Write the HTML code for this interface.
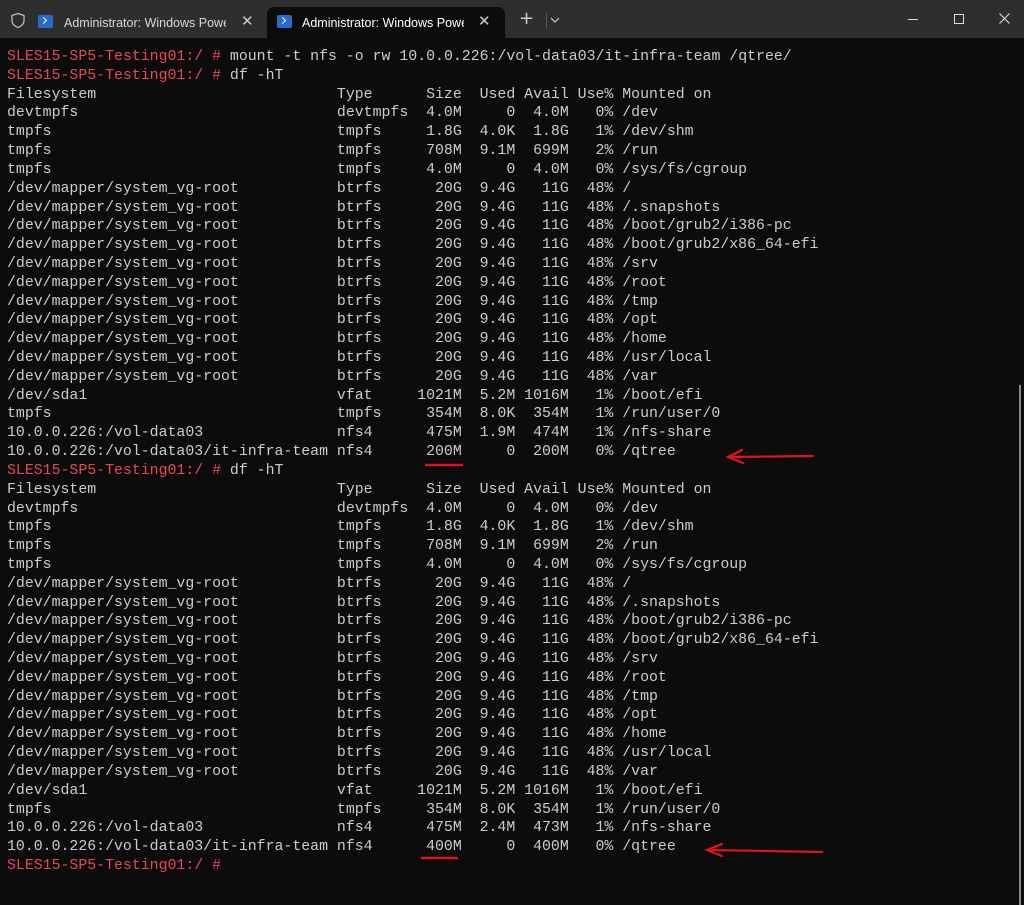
<!DOCTYPE html>
<html><head><meta charset="utf-8"><style>
html,body{margin:0;padding:0;background:#0c0c0c;width:1024px;height:905px;overflow:hidden}
#tb{position:absolute;left:0;top:0;width:1024px;height:38px;background:#2e2e2e}
.tab{position:absolute;top:7px;height:31px;font:12.5px "Liberation Sans",sans-serif;color:#d8d8d8}
.tab .t{position:absolute;top:9px;white-space:nowrap;overflow:hidden;width:162px}
.act{background:#0c0c0c;border-radius:7px 7px 0 0;left:267px;width:238px;color:#fff}
.ps{position:absolute;top:8px;width:15px;height:13px;background:#2a6ad0;border-radius:2px}
.ps:after{content:"";position:absolute;left:3px;top:3px;width:4px;height:4px;border-right:1.5px solid #fff;border-top:1.5px solid #fff;transform:rotate(45deg)}
.x{position:absolute;top:5px;font:15px "DejaVu Sans",sans-serif;color:#ccc}
#term{position:absolute;left:7px;top:48px;font:14.87px "Liberation Mono",monospace;color:#cccccc;line-height:18.82px;white-space:pre}
.r{color:#e74856}
i{font-style:normal;display:inline-block;width:37ch}
b{font-weight:normal;display:inline-block;width:9ch}
</style></head><body>
<div id="tb">
 <svg style="position:absolute;left:10px;top:12px" width="16" height="17" viewBox="0 0 16 17"><path d="M8 1.5 L14 3.5 V8.5 C14 12 11 14.5 8 15.5 C5 14.5 2 12 2 8.5 V3.5 Z" fill="none" stroke="#bbb" stroke-width="1.3"/></svg>
 <div class="tab" style="left:30px;width:230px">
  <div class="ps" style="left:8px"></div>
  <div class="t" style="left:34px">Administrator: Windows PowerShell</div>
  <div class="x" style="left:211px">✕</div>
 </div>
 <div class="tab act">
  <div class="ps" style="left:10px"></div>
  <div class="t" style="left:35px">Administrator: Windows PowerShell</div>
  <div class="x" style="left:211px">✕</div>
 </div>
 <div style="position:absolute;left:519px;top:8px;font:18px 'DejaVu Sans',sans-serif;color:#ccc">+</div>
 <div style="position:absolute;left:546px;top:13px;width:1px;height:16px;background:#555"></div>
 <svg style="position:absolute;left:550px;top:17px" width="10" height="7"><path d="M1 1 L5 5 L9 1" fill="none" stroke="#ccc" stroke-width="1.2"/></svg>
 <div style="position:absolute;left:908px;top:19px;width:10px;height:1px;background:#ddd"></div>
 <div style="position:absolute;left:954px;top:14px;width:8px;height:8px;border:1px solid #ddd"></div>
 <svg style="position:absolute;left:999px;top:13px" width="11" height="11"><path d="M0.5 0.5 L10.5 10.5 M10.5 0.5 L0.5 10.5" stroke="#ddd" stroke-width="1.1"/></svg>
</div>
<div id="term"><span class="r">SLES15-SP5-Testing01:/ #</span> mount -t nfs -o rw 10.0.0.226:/vol-data03/it-infra-team /qtree/
<span class="r">SLES15-SP5-Testing01:/ #</span> df -hT
<i>Filesystem</i><b>Type</b> Size  Used Avail Use% Mounted on
<i>devtmpfs</i><b>devtmpfs</b> 4.0M     0  4.0M   0% /dev
<i>tmpfs</i><b>tmpfs</b> 1.8G  4.0K  1.8G   1% /dev/shm
<i>tmpfs</i><b>tmpfs</b> 708M  9.1M  699M   2% /run
<i>tmpfs</i><b>tmpfs</b> 4.0M     0  4.0M   0% /sys/fs/cgroup
<i>/dev/mapper/system_vg-root</i><b>btrfs</b>  20G  9.4G   11G  48% /
<i>/dev/mapper/system_vg-root</i><b>btrfs</b>  20G  9.4G   11G  48% /.snapshots
<i>/dev/mapper/system_vg-root</i><b>btrfs</b>  20G  9.4G   11G  48% /boot/grub2/i386-pc
<i>/dev/mapper/system_vg-root</i><b>btrfs</b>  20G  9.4G   11G  48% /boot/grub2/x86_64-efi
<i>/dev/mapper/system_vg-root</i><b>btrfs</b>  20G  9.4G   11G  48% /srv
<i>/dev/mapper/system_vg-root</i><b>btrfs</b>  20G  9.4G   11G  48% /root
<i>/dev/mapper/system_vg-root</i><b>btrfs</b>  20G  9.4G   11G  48% /tmp
<i>/dev/mapper/system_vg-root</i><b>btrfs</b>  20G  9.4G   11G  48% /opt
<i>/dev/mapper/system_vg-root</i><b>btrfs</b>  20G  9.4G   11G  48% /home
<i>/dev/mapper/system_vg-root</i><b>btrfs</b>  20G  9.4G   11G  48% /usr/local
<i>/dev/mapper/system_vg-root</i><b>btrfs</b>  20G  9.4G   11G  48% /var
<i>/dev/sda1</i><b>vfat</b>1021M  5.2M 1016M   1% /boot/efi
<i>tmpfs</i><b>tmpfs</b> 354M  8.0K  354M   1% /run/user/0
<i>10.0.0.226:/vol-data03</i><b>nfs4</b> 475M  1.9M  474M   1% /nfs-share
<i>10.0.0.226:/vol-data03/it-infra-team</i><b>nfs4</b> 200M     0  200M   0% /qtree
<span class="r">SLES15-SP5-Testing01:/ #</span> df -hT
<i>Filesystem</i><b>Type</b> Size  Used Avail Use% Mounted on
<i>devtmpfs</i><b>devtmpfs</b> 4.0M     0  4.0M   0% /dev
<i>tmpfs</i><b>tmpfs</b> 1.8G  4.0K  1.8G   1% /dev/shm
<i>tmpfs</i><b>tmpfs</b> 708M  9.1M  699M   2% /run
<i>tmpfs</i><b>tmpfs</b> 4.0M     0  4.0M   0% /sys/fs/cgroup
<i>/dev/mapper/system_vg-root</i><b>btrfs</b>  20G  9.4G   11G  48% /
<i>/dev/mapper/system_vg-root</i><b>btrfs</b>  20G  9.4G   11G  48% /.snapshots
<i>/dev/mapper/system_vg-root</i><b>btrfs</b>  20G  9.4G   11G  48% /boot/grub2/i386-pc
<i>/dev/mapper/system_vg-root</i><b>btrfs</b>  20G  9.4G   11G  48% /boot/grub2/x86_64-efi
<i>/dev/mapper/system_vg-root</i><b>btrfs</b>  20G  9.4G   11G  48% /srv
<i>/dev/mapper/system_vg-root</i><b>btrfs</b>  20G  9.4G   11G  48% /root
<i>/dev/mapper/system_vg-root</i><b>btrfs</b>  20G  9.4G   11G  48% /tmp
<i>/dev/mapper/system_vg-root</i><b>btrfs</b>  20G  9.4G   11G  48% /opt
<i>/dev/mapper/system_vg-root</i><b>btrfs</b>  20G  9.4G   11G  48% /home
<i>/dev/mapper/system_vg-root</i><b>btrfs</b>  20G  9.4G   11G  48% /usr/local
<i>/dev/mapper/system_vg-root</i><b>btrfs</b>  20G  9.4G   11G  48% /var
<i>/dev/sda1</i><b>vfat</b>1021M  5.2M 1016M   1% /boot/efi
<i>tmpfs</i><b>tmpfs</b> 354M  8.0K  354M   1% /run/user/0
<i>10.0.0.226:/vol-data03</i><b>nfs4</b> 475M  2.4M  473M   1% /nfs-share
<i>10.0.0.226:/vol-data03/it-infra-team</i><b>nfs4</b> 400M     0  400M   0% /qtree
<span class="r">SLES15-SP5-Testing01:/ #</span></div>
<svg style="position:absolute;left:0;top:0" width="1024" height="905">
 <path d="M426 465 L462 465" stroke="#e0141e" stroke-width="2.5" stroke-linecap="round"/>
 <path d="M813 456 L730 457 M742 450 L728 457 L743 463" fill="none" stroke="#e0141e" stroke-width="2.2" stroke-linecap="round"/>
 <path d="M422 858 L457 858" stroke="#e0141e" stroke-width="2.5" stroke-linecap="round"/>
 <path d="M822 852 L709 850 M722 844 L707 850 L722 856" fill="none" stroke="#e0141e" stroke-width="2.2" stroke-linecap="round"/>
 <rect x="1019" y="385" width="2" height="520" fill="#8a8a8a"/>
</svg>
</body></html>
